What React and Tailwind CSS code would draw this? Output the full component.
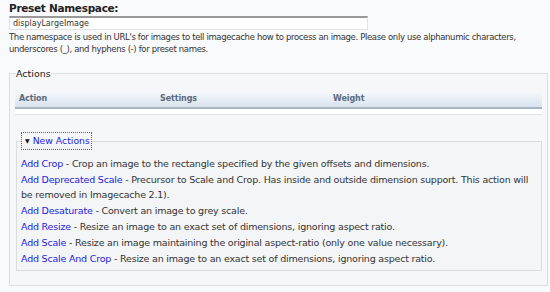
import React from 'react'

const actions = [
  { name: 'Add Crop', desc: 'Crop an image to the rectangle specified by the given offsets and dimensions.' },
  { name: 'Add Deprecated Scale', desc: 'Precursor to Scale and Crop. Has inside and outside dimension support. This action will be removed in Imagecache 2.1).' },
  { name: 'Add Desaturate', desc: 'Convert an image to grey scale.' },
  { name: 'Add Resize', desc: 'Resize an image to an exact set of dimensions, ignoring aspect ratio.' },
  { name: 'Add Scale', desc: 'Resize an image maintaining the original aspect-ratio (only one value necessary).' },
  { name: 'Add Scale And Crop', desc: 'Resize an image to an exact set of dimensions, ignoring aspect ratio.' },
]

const App = () => {
  return (
    <div className="w-[550px] h-[292px] overflow-hidden bg-[#f9fafc] text-[#333] font-['DejaVu_Sans',Verdana,sans-serif]">
      <div className="pl-[9px] pt-[2px]">
        <label className="block text-[10.5px] font-bold tracking-[-0.3px] text-[#222] leading-[12px]" htmlFor="ns">Preset Namespace:</label>
        <input
          id="ns"
          type="text"
          defaultValue="displayLargeImage"
          className="mt-[2px] block w-[359px] h-[14px] px-[3px] text-[8px] leading-[11px] text-[#333] bg-white border border-[#e2e2e2] border-t-2 border-t-[#999] outline-none"
        />
        <p className="mt-[2px] text-[8.5px] tracking-[-0.35px] leading-[11.5px] pr-[4px] text-[#333]">
          The namespace is used in URL's for images to tell imagecache how to process an image. Please only use alphanumic characters, underscores (_), and hyphens (-) for preset names.
        </p>
      </div>

      <fieldset className="ml-[9px] mr-[2px] mt-[13px] border border-[#dcdde0] bg-[#f6f7f9] px-[5px] pb-[14px]">
        <legend className="ml-[1px] text-[9.5px] leading-[11px] text-[#222]">Actions</legend>

        <div className="mt-[12px] flex h-[18px] items-center border-b-2 border-b-[#a7b5c7] bg-gradient-to-b from-[#f7f9fb] to-[#d8e2ee] text-[8px] font-bold tracking-[-0.1px] text-[#5c6b7e]">
          <div className="w-[145px] pl-[4px]">Action</div>
          <div className="w-[173px]">Settings</div>
          <div>Weight</div>
        </div>
        <div className="h-[6px] border-b border-[#e0e2e6] bg-white" />

        <fieldset className="mt-[17px] ml-px border border-[#dcdde0] bg-[#f4f5f7] px-[4px] pb-[3px]">
          <legend className="border border-dotted border-[#666] pl-[3px] pr-[1px] text-[9.3px] leading-[16px] text-[#2323dd]">
            <span className="mr-[3px] inline-block text-[6px] align-[1px] text-[#111]">▼</span>New Actions
          </legend>
          <div className="mt-[6px] pr-[4px] text-[9.5px] tracking-[-0.2px] leading-[15px]">
            {actions.map(a => (
              <div key={a.name} className="mb-px">
                <a href="#" className="text-[#2323dd]">{a.name}</a> - {a.desc}
              </div>
            ))}
          </div>
        </fieldset>
      </fieldset>
    </div>
  )
}

export default App
